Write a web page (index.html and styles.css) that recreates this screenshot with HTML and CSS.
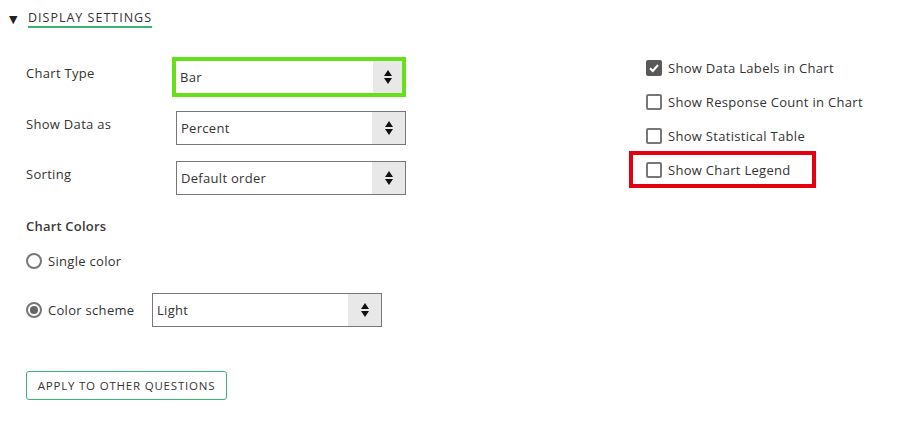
FILE: index.html
```html
<!DOCTYPE html>
<html>
<head>
<meta charset="utf-8">
<link rel="stylesheet" href="styles.css">
</head>
<body>
<div class="page">
  <div class="header">
    <span class="caret">&#9660;</span>
    <span class="title">DISPLAY SETTINGS</span>
  </div>
  <div class="main">
    <div class="left">
      <div class="frow first">
        <div class="label">Chart Type</div>
        <div class="select hl-green"><span class="val">Bar</span><span class="arrows"><svg width="10" height="16" viewBox="0 0 10 16"><path d="M5 1 L9 7 L1 7 Z M1 9 L9 9 L5 15 Z" fill="#111"/></svg></span></div>
      </div>
      <div class="frow second">
        <div class="label">Show Data as</div>
        <div class="select"><span class="val">Percent</span><span class="arrows"><svg width="10" height="16" viewBox="0 0 10 16"><path d="M5 1 L9 7 L1 7 Z M1 9 L9 9 L5 15 Z" fill="#111"/></svg></span></div>
      </div>
      <div class="frow third">
        <div class="label">Sorting</div>
        <div class="select"><span class="val">Default order</span><span class="arrows"><svg width="10" height="16" viewBox="0 0 10 16"><path d="M5 1 L9 7 L1 7 Z M1 9 L9 9 L5 15 Z" fill="#111"/></svg></span></div>
      </div>
      <div class="subhead">Chart Colors</div>
      <div class="radio-row single">
        <span class="radio"></span><span class="rlabel">Single color</span>
      </div>
      <div class="radio-row scheme">
        <span class="radio on"></span><span class="rlabel wide">Color scheme</span>
        <div class="select"><span class="val">Light</span><span class="arrows"><svg width="10" height="16" viewBox="0 0 10 16"><path d="M5 1 L9 7 L1 7 Z M1 9 L9 9 L5 15 Z" fill="#111"/></svg></span></div>
      </div>
      <button class="apply">APPLY TO OTHER QUESTIONS</button>
    </div>
    <div class="right">
      <div class="crow"><span class="cbox checked"><svg width="12" height="12" viewBox="0 0 12 12"><path d="M2 6.2 L4.8 9 L10 3" stroke="#fff" stroke-width="2" fill="none"/></svg></span><span class="clabel">Show Data Labels in Chart</span></div>
      <div class="crow"><span class="cbox"></span><span class="clabel">Show Response Count in Chart</span></div>
      <div class="crow"><span class="cbox"></span><span class="clabel">Show Statistical Table</span></div>
      <div class="crow hl-red"><span class="cbox"></span><span class="clabel">Show Chart Legend</span></div>
    </div>
  </div>
</div>
</body>
</html>
```
FILE: styles.css
```css
* { box-sizing: border-box; }
body {
  margin: 0;
  background: #fff;
  font-family: "Open Sans", "Noto Sans", sans-serif;
  font-size: 13px;
  letter-spacing: 0.3px;
  color: #333;
}
.page { width: 901px; height: 424px; }
.header {
  display: flex;
  align-items: center;
  padding: 11px 0 0 9px;
  height: 28px;
}
.caret { font-size: 11px; color: #222; width: 19px; line-height: 14px; font-family: "DejaVu Sans", sans-serif; letter-spacing: 0; }
.title {
  font-size: 12.5px;
  letter-spacing: 1px;
  color: #333;
  line-height: 14px;
  border-bottom: 2px solid #3cb371;
  padding-bottom: 1px;
}
.main { display: flex; padding-top: 25px; }
.left { flex: 0 0 629px; padding: 4px 0 0 26px; }
.frow { display: flex; align-items: center; }
.frow .label { width: 150px; margin-bottom: 8px; line-height: 16px; }
.frow.second { margin-top: 14px; }
.frow.third { margin-top: 16px; }
.select {
  width: 230px;
  height: 34px;
  border: 1px solid #777;
  display: flex;
  align-items: stretch;
  background: #fff;
}
.select .val { flex: 1; padding-left: 4px; display: flex; align-items: center; color: #333; }
.select .arrows {
  width: 33px;
  background: #e8e8e8;
  display: flex;
  align-items: center;
  justify-content: center;
}
.select.hl-green {
  width: 234px;
  height: 40px;
  margin-left: -4px;
  border: 4px solid #66e01a;
}
.select.hl-green .arrows { width: 29px; }
.subhead { margin-top: 23px; font-weight: 600; line-height: 16px; color: #3a3a3a; letter-spacing: 0.2px; }
.radio-row { display: flex; align-items: center; }
.radio-row.single { margin-top: 19px; height: 16px; }
.radio-row.scheme { margin-top: 24px; }
.radio {
  width: 16px; height: 16px;
  border: 2px solid #777;
  border-radius: 50%;
  display: flex; align-items: center; justify-content: center;
  flex: none;
}
.radio.on::after {
  content: "";
  width: 8px; height: 8px; border-radius: 50%; background: #666;
}
.rlabel { margin-left: 6px; }
.rlabel.wide { width: 104px; }
.apply {
  margin-top: 44px;
  height: 29px;
  width: 201px;
  border: 1px solid #3cb371;
  border-radius: 3px;
  background: #fff;
  font-family: "Open Sans", "Noto Sans", sans-serif;
  font-size: 11.5px;
  letter-spacing: 0.8px;
  color: #333;
  padding: 0;
}
.right { display: flex; flex-direction: column; gap: 5px; }
.crow {
  width: 179px;
  height: 29px;
  margin-left: 4px;
  padding-left: 13px;
  display: flex;
  align-items: center;
  white-space: nowrap;
}
.crow.hl-red { outline: 4px solid #e5000f; }
.cbox {
  width: 16px; height: 16px;
  border: 2px solid #777;
  border-radius: 2px;
  display: flex; align-items: center; justify-content: center;
  flex: none;
}
.cbox.checked { background: #595959; border-color: #595959; }
.clabel { margin-left: 6px; }
```
